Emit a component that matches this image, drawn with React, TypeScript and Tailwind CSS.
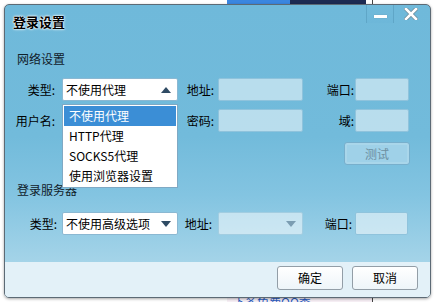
import React from 'react';

const font = 'font-["Noto_Sans_CJK_SC","Noto_Sans",sans-serif]';

const Label: React.FC<{ w: string; children: React.ReactNode }> = ({ w, children }) => (
  <div className={`${w} shrink-0 text-right text-[12px] leading-[23px] text-black`}>{children}</div>
);

const Field: React.FC<{ w: string; ml: string }> = ({ w, ml }) => (
  <div className={`${w} ${ml} h-[23px] shrink-0 rounded-[2px] border border-[#8fc3dc] bg-white/50`} />
);

const Arrow: React.FC<{ up?: boolean; color?: string }> = ({ up, color = '#2f4b64' }) => (
  <svg width="10" height="6" viewBox="0 0 10 6" className="shrink-0">
    {up ? <path d="M0 6 L5 0 L10 6 Z" fill={color} /> : <path d="M0 0 L10 0 L5 6 Z" fill={color} />}
  </svg>
);

const Select: React.FC<{ w: string; ml: string; text?: string; up?: boolean; disabled?: boolean }> = ({
  w,
  ml,
  text,
  up,
  disabled,
}) => (
  <div
    className={`${w} ${ml} flex h-[23px] shrink-0 items-center justify-between rounded-[2px] border pl-[3px] pr-[6px] ${
      disabled ? 'border-[#a2cde1] bg-white/50' : 'border-[#8bb8d2] bg-white'
    }`}
  >
    <span className="text-[12px] leading-[16px] text-black">{text}</span>
    <Arrow up={up} color={disabled ? '#7b9db2' : '#2f4b64'} />
  </div>
);

const options = ['不使用代理', 'HTTP代理', 'SOCKS5代理', '使用浏览器设置'];

export default function App() {
  return (
    <div className={`relative h-[302px] w-[435px] overflow-hidden bg-white ${font}`}>
      {/* desktop behind the dialog */}
      <div className="absolute left-[227px] top-0 flex h-[5px] w-[139px] bg-[#1d2b52]">
        <div className="h-full w-[63px] bg-[#3a86e0]" />
      </div>
      <div className="absolute left-[372px] top-0 h-[6px] w-[1px] bg-[#444]" />
      <div className="absolute left-[372px] top-[296px] h-[6px] w-[1px] bg-[#444]" />
      <div className="absolute left-[227px] top-[296px] h-[6px] w-[145px] bg-[#f8f0f6]" />
      <div className="absolute left-[233px] top-[294px] text-[12px] leading-[16px] text-[#2a5cc0]">下多免费QQ秀</div>

      {/* dialog window */}
      <div className="relative ml-[4px] mt-[4px] flex h-[294px] w-[427px] flex-col overflow-hidden rounded-[5px] border border-[#5c6a75] bg-[linear-gradient(to_bottom,#6fb9da_0%,#72bbdb_45%,#83c4e1_65%,#b6dcec_100%)] shadow-[0_1px_3px_rgba(0,0,0,0.35)]">
        {/* title bar */}
        <div className="flex h-[46px] shrink-0 items-start justify-between">
          <div className="pl-[8px] pt-[8px] text-[13px] font-bold leading-[18px] text-black [text-shadow:0_0_3px_#fff,0_0_2px_#fff,0_0_1px_#fff]">
            登录设置
          </div>
          <div className="mr-[3px] flex h-[18px]">
            <div className="flex w-[27px] items-center justify-center border-l border-[#5fa6c7] bg-[linear-gradient(to_bottom,#72bbdb,#6db7d9)]">
              <div className="mt-[4px] h-[3px] w-[13px] bg-white shadow-[0_0_1px_#5a7a8c]" />
            </div>
            <div className="flex w-[34px] items-center justify-center border-l border-[#5fa6c7]">
              <svg width="14" height="12" viewBox="0 0 14 12">
                <path d="M2 1 L12 11 M12 1 L2 11" stroke="#6a8796" strokeWidth="4" strokeLinecap="square" />
                <path d="M2 1 L12 11 M12 1 L2 11" stroke="#ffffff" strokeWidth="2.6" strokeLinecap="square" />
              </svg>
            </div>
          </div>
        </div>

        {/* 网络设置 */}
        <div className="pl-[12px] text-[12px] leading-[16px] text-[#10202a]">网络设置</div>

        <div className="mt-[11px] flex">
          <Label w="w-[50px]">类型:</Label>
          <Select w="w-[116px]" ml="ml-[7px]" text="不使用代理" up />
          <Label w="w-[36px]">地址:</Label>
          <Field w="w-[85px]" ml="ml-[4px]" />
          <Label w="w-[51px]">端口:</Label>
          <Field w="w-[54px]" ml="ml-[1px]" />
        </div>

        <div className="mt-[8px] flex">
          <Label w="w-[50px]">用户名:</Label>
          <div className="ml-[7px] w-[116px] shrink-0" />
          <Label w="w-[36px]">密码:</Label>
          <Field w="w-[85px]" ml="ml-[4px]" />
          <Label w="w-[51px]">域:</Label>
          <Field w="w-[54px]" ml="ml-[1px]" />
        </div>

        <div className="mt-[10px] flex">
          <button className="ml-[339px] flex h-[23px] w-[66px] items-center justify-center rounded-[3px] border border-[#78afcc] bg-[#9fd1e8] text-[12px] leading-[16px] text-[#6d8fa2] shadow-[inset_0_0_0_2px_#a9d6ea]">
            测试
          </button>
        </div>

        {/* 登录服务器 */}
        <div className="mt-[17px] pl-[12px] text-[12px] leading-[16px] text-[#10202a]">登录服务器</div>

        <div className="mt-[14px] flex">
          <Label w="w-[52px]">类型:</Label>
          <Select w="w-[116px]" ml="ml-[5px]" text="不使用高级选项" />
          <Label w="w-[34px]">地址:</Label>
          <Select w="w-[85px]" ml="ml-[6px]" disabled />
          <Label w="w-[49px]">端口:</Label>
          <Field w="w-[53px]" ml="ml-[3px]" />
        </div>

        <div className="flex-1" />

        {/* footer */}
        <div className="flex h-[35px] shrink-0 justify-end gap-[9px] bg-[#e3f1f8] pr-[12px] pt-[4px]">
          {['确定', '取消'].map((t) => (
            <button
              key={t}
              className="flex h-[24px] w-[66px] items-center justify-center rounded-[3px] border border-[#939ea7] bg-[linear-gradient(to_bottom,#ffffff,#eef5f9)] text-[12px] leading-[16px] text-black"
            >
              {t}
            </button>
          ))}
        </div>

        {/* open dropdown list */}
        <div className="absolute left-[57px] top-[99px] w-[116px] border border-[#7fa9c4] bg-white p-[1px]">
          {options.map((o, i) => (
            <div
              key={o}
              className={`flex h-[20px] items-center pl-[5px] text-[12px] leading-[16px] ${
                i === 0 ? 'bg-[#3b8ed6] text-white' : 'text-black'
              }`}
            >
              {o}
            </div>
          ))}
        </div>
      </div>
    </div>
  );
}
